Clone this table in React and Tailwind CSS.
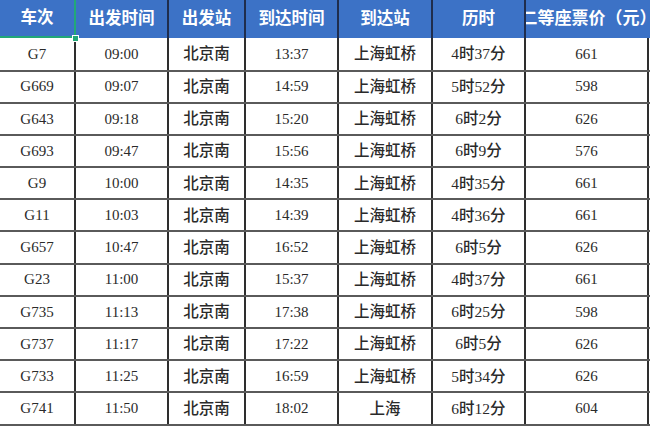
import React from "react";

const cols = [76, 93, 77, 93, 94, 93, 123];
const headers = ["车次", "出发时间", "出发站", "到达时间", "到达站", "历时", "二等座票价（元）"];
const rows = [
  ["G7", "09:00", "北京南", "13:37", "上海虹桥", "4时37分", "661"],
  ["G669", "09:07", "北京南", "14:59", "上海虹桥", "5时52分", "598"],
  ["G643", "09:18", "北京南", "15:20", "上海虹桥", "6时2分", "626"],
  ["G693", "09:47", "北京南", "15:56", "上海虹桥", "6时9分", "576"],
  ["G9", "10:00", "北京南", "14:35", "上海虹桥", "4时35分", "661"],
  ["G11", "10:03", "北京南", "14:39", "上海虹桥", "4时36分", "661"],
  ["G657", "10:47", "北京南", "16:52", "上海虹桥", "6时5分", "626"],
  ["G23", "11:00", "北京南", "15:37", "上海虹桥", "4时37分", "661"],
  ["G735", "11:13", "北京南", "17:38", "上海虹桥", "6时25分", "598"],
  ["G737", "11:17", "北京南", "17:22", "上海虹桥", "6时5分", "626"],
  ["G733", "11:25", "北京南", "16:59", "上海虹桥", "5时34分", "626"],
  ["G741", "11:50", "北京南", "18:02", "上海", "6时12分", "604"],
];

const font = { fontFamily: '"Liberation Serif", "Noto Sans CJK SC", serif' };

export default function App() {
  return (
    <div className="w-[650px] h-[429px] bg-white overflow-hidden relative" style={font}>
      <div className="flex h-[38px] bg-[#3c72c6] text-white font-bold text-[16.5px]">
        {headers.map((h, i) => (
          <div
            key={i}
            style={{ width: i === 6 ? 125 : cols[i] }}
            className={
              "flex items-center justify-center overflow-hidden whitespace-nowrap shrink-0 " +
              (i === 0
                ? "border-r-2 border-b-2 border-[#22a878]"
                : i === 6
                ? "text-[17px]"
                : "border-r-2 border-[#1f2d4d]")
            }
          >
            <span className="shrink-0">{h}</span>
          </div>
        ))}
      </div>
      {rows.map((r, ri) => (
        <div
          key={ri}
          className={
            "flex border-b-2 border-[#5a5a5a] text-[#2a2a2a] " +
            (ri === 0 ? "h-[33.5px]" : "h-[32.2px]")
          }
        >
          {r.map((c, ci) => (
            <div
              key={ci}
              style={{ width: cols[ci] }}
              className={
                "flex items-center justify-center shrink-0 border-r-2 border-[#2e2e2e] " +
                (/[\u4e00-\u9fff]/.test(c) ? "text-[15.5px] font-medium" : "text-[15px]")
              }
            >
              {c}
            </div>
          ))}
        </div>
      ))}
      <div className="absolute left-[72px] top-[35px] w-[7px] h-[7px] bg-[#22a878] border border-white" />
    </div>
  );
}
